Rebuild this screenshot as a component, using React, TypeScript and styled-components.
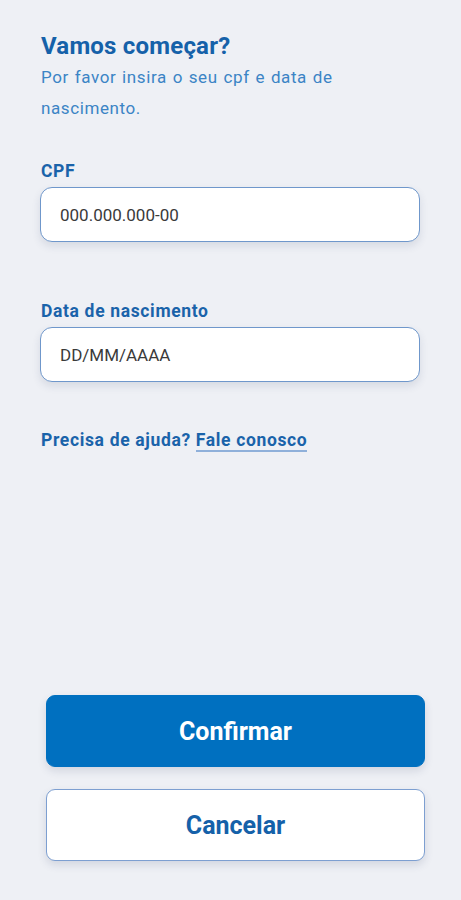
import styled, { createGlobalStyle } from "styled-components";

const GlobalStyle = createGlobalStyle`
  html, body {
    margin: 0;
    padding: 0;
    background: #eef0f5;
  }
  * {
    box-sizing: border-box;
  }
`;

const App = () => {
  return (
    <>
      <GlobalStyle />
      <StyledPage>
        <StyledForm>
          <StyledTitle>Vamos começar?</StyledTitle>
          <StyledSubtitle>Por favor insira o seu cpf e data de nascimento.</StyledSubtitle>

          <StyledField marginTop="36px">
            <StyledLabel>CPF</StyledLabel>
            <StyledInput placeholder="000.000.000-00" />
          </StyledField>

          <StyledField marginTop="58px">
            <StyledLabel>Data de nascimento</StyledLabel>
            <StyledInput placeholder="DD/MM/AAAA" />
          </StyledField>

          <StyledHelp>
            Precisa de ajuda? <StyledLink href="#">Fale conosco</StyledLink>
          </StyledHelp>
        </StyledForm>

        <StyledActions>
          <StyledButton variant="primary">Confirmar</StyledButton>
          <StyledButton variant="secondary">Cancelar</StyledButton>
        </StyledActions>
      </StyledPage>
    </>
  );
};

const StyledPage = styled.div`
  display: flex;
  flex-direction: column;
  height: 900px;
  font-family: "Roboto", "Liberation Sans", sans-serif;
`;

const StyledForm = styled.div`
  display: flex;
  flex-direction: column;
  padding: 31px 41px 0 40px;
`;

const StyledTitle = styled.h1`
  margin: 0 0 0 1px;
  font-size: 24px;
  font-weight: 700;
  line-height: 30px;
  letter-spacing: 0.2px;
  color: #1561a9;
`;

const StyledSubtitle = styled.p`
  margin: 1px 0 0 1px;
  font-size: 17px;
  font-weight: 400;
  line-height: 31px;
  letter-spacing: 0.6px;
  word-spacing: 1px;
  color: #3b84c5;
  max-width: 310px;
`;

const StyledField = styled.div<{ marginTop?: string }>`
  display: flex;
  flex-direction: column;
  gap: 5px;
  margin-top: ${({ marginTop }) => (marginTop ? marginTop : "0")};
`;

const StyledLabel = styled.label`
  margin-left: 1px;
  font-size: 17.5px;
  font-weight: 700;
  line-height: 22px;
  letter-spacing: 0.65px;
  color: #1a63aa;
`;

const StyledInput = styled.input`
  height: 55px;
  width: 100%;
  padding: 0 19px;
  border: 1.5px solid #6f97cb;
  border-radius: 12px;
  background: #ffffff;
  box-shadow: 0 4px 8px rgba(40, 60, 100, 0.12);
  font-family: "Roboto", "Liberation Sans", sans-serif;
  font-size: 17px;
  color: #333;
  outline: none;

  &::placeholder {
    color: #3a3a3a;
  }
`;

const StyledHelp = styled.p`
  margin: 47px 0 0 1px;
  font-size: 17.5px;
  font-weight: 700;
  line-height: 22px;
  letter-spacing: 0.65px;
  color: #1a63aa;
`;

const StyledLink = styled.a`
  color: #1a63aa;
  text-decoration: none;
  border-bottom: 2px solid #8fb0da;
`;

const StyledActions = styled.div`
  display: flex;
  flex-direction: column;
  gap: 22px;
  margin-top: auto;
  padding: 0 36px 39px 46px;
`;

const StyledButton = styled.button<{ variant: "primary" | "secondary" }>`
  height: 72px;
  width: 100%;
  border-radius: 9px;
  font-family: "Roboto", "Liberation Sans", sans-serif;
  font-size: 25px;
  font-weight: 700;
  cursor: pointer;
  box-shadow: 0 4px 8px rgba(40, 60, 100, 0.14);
  border: ${({ variant }) => (variant === "primary" ? "1px solid #0070c0" : "1.5px solid #7d9fd1")};
  background: ${({ variant }) => (variant === "primary" ? "#0070c0" : "#ffffff")};
  color: ${({ variant }) => (variant === "primary" ? "#ffffff" : "#1561a9")};
`;

export default App;
